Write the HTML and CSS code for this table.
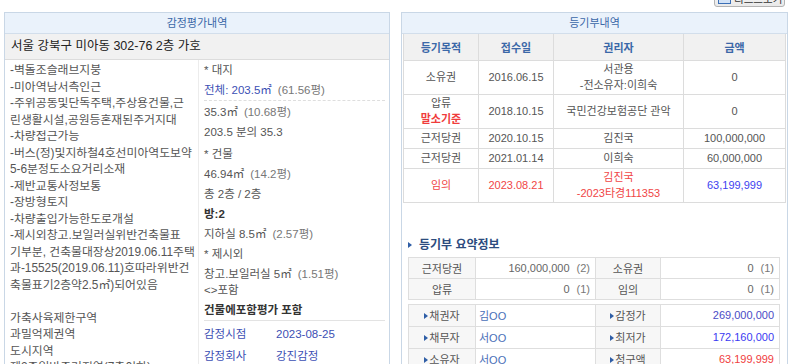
FILE: index.html
```html
<!DOCTYPE html>
<html lang="ko">
<head>
<meta charset="utf-8">
<title>감정평가내역</title>
<link rel="stylesheet" href="styles.css">
</head>
<body>
<div class="page">
  <div class="toolbar">
    <button class="btn"><span class="btn-icon"></span><span class="btn-text">리스트보기</span></button>
  </div>
  <div class="panels">
    <section class="panel left">
      <div class="panel-head">감정평가내역</div>
      <div class="addr">서울 강북구 미아동 302-76 2층 가호</div>
      <div class="appr">
        <div class="desc">-벽돌조슬래브지붕<br>-미아역남서측인근<br>-주위공동및단독주택,주상용건물,근<br>린생활시설,공원등혼재된주거지대<br>-차량접근가능<br>-버스(정)및지하철4호선미아역도보약<br>5-6분정도소요거리소재<br>-제반교통사정보통<br>-장방형토지<br>-차량출입가능한도로개설<br>-제시외창고.보일러실위반건축물표<br>기부분, 건축물대장상2019.06.11주택<br>과-15525(2019.06.11)호따라위반건<br>축물표기2층약2.5㎡)되어있음<br><br>가축사육제한구역<br>과밀억제권역<br>도시지역<br>제2종일반주거지역(7층이하)</div>
        <div class="facts">
          <div class="f">* 대지</div>
          <div class="f"><span class="blue">전체: 203.5㎡</span><span class="py">(61.56평)</span></div>
          <div class="f sep">35.3㎡<span class="py">(10.68평)</span></div>
          <div class="f">203.5 분의 35.3</div>
          <div class="f sec">* 건물</div>
          <div class="f">46.94㎡<span class="py">(14.2평)</span></div>
          <div class="f">총 2층 / 2층</div>
          <div class="f b">방:2</div>
          <div class="f">지하실 8.5㎡<span class="py">(2.57평)</span></div>
          <div class="f">* 제시외</div>
          <div class="f">창고.보일러실 5㎡<span class="py">(1.51평)</span><br>&lt;&gt;포함</div>
          <div class="f b">건물에포함평가 포함</div>
          <div class="meta">
            <div class="m"><span class="mk">감정시점</span><span>2023-08-25</span></div>
            <div class="m"><span class="mk">감정회사</span><span>강진감정</span></div>
          </div>
        </div>
      </div>
    </section>

    <section class="panel right">
      <div class="panel-head">등기부내역</div>
      <table class="reg">
        <colgroup><col class="c1"><col class="c2"><col class="c3"><col></colgroup>
        <thead>
          <tr><th>등기목적</th><th>접수일</th><th>권리자</th><th>금액</th></tr>
        </thead>
        <tbody>
          <tr><td>소유권</td><td>2016.06.15</td><td>서관용<br>-전소유자:이희숙</td><td>0</td></tr>
          <tr><td>압류<br><b class="red">말소기준</b></td><td>2018.10.15</td><td>국민건강보험공단 관악</td><td>0</td></tr>
          <tr><td>근저당권</td><td>2020.10.15</td><td>김진국</td><td>100,000,000</td></tr>
          <tr><td>근저당권</td><td>2021.01.14</td><td>이희숙</td><td>60,000,000</td></tr>
          <tr class="redrow"><td>임의</td><td>2023.08.21</td><td>김진국<br>-2023타경111353</td><td class="amt-blue">63,199,999</td></tr>
        </tbody>
      </table>

      <div class="summary">
        <h3 class="sum-title"><span class="tri"></span>등기부 요약정보</h3>
        <table class="sum">
          <colgroup><col class="s1"><col class="s2"><col class="s3"><col></colgroup>
          <tr><td class="lab">근저당권</td><td class="val">160,000,000<span class="cnt">(2)</span></td><td class="lab">소유권</td><td class="val">0<span class="cnt">(1)</span></td></tr>
          <tr><td class="lab">압류</td><td class="val">0<span class="cnt">(1)</span></td><td class="lab">임의</td><td class="val">0<span class="cnt">(1)</span></td></tr>
        </table>
        <table class="sum sum2">
          <colgroup><col class="s1"><col class="s2"><col class="s3"><col></colgroup>
          <tr><td class="lab"><span class="tri sm"></span>채권자</td><td class="name">김OO</td><td class="lab"><span class="tri sm"></span>감정가</td><td class="val v1">269,000,000</td></tr>
          <tr><td class="lab"><span class="tri sm"></span>채무자</td><td class="name">서OO</td><td class="lab"><span class="tri sm"></span>최저가</td><td class="val v2">172,160,000</td></tr>
          <tr><td class="lab"><span class="tri sm"></span>소유자</td><td class="name">서OO</td><td class="lab"><span class="tri sm"></span>청구액</td><td class="val v3">63,199,999</td></tr>
        </table>
      </div>
    </section>
  </div>
</div>
</body>
</html>
```

FILE: styles.css
```css
* { box-sizing: border-box; margin: 0; padding: 0; }

body {
  margin: 0;
  background: #fff;
  font-family: "Liberation Sans", "Noto Sans CJK KR", sans-serif;
  font-size: 11px;
  color: #555;
}

.page {
  width: 800px;
  height: 364px;
  overflow: hidden;
}

.toolbar {
  height: 12px;
  display: flex;
  justify-content: flex-end;
  padding-right: 15px;
}

.btn {
  height: 22px;
  width: 71px;
  margin-top: -15px;
  border: 1px solid #b3b3b3;
  border-radius: 3px;
  background: linear-gradient(#ffffff, #e9e9e9);
  display: flex;
  align-items: flex-end;
  gap: 3px;
  padding: 0 3px 1px;
  font: 10.5px "Liberation Sans", "Noto Sans CJK KR", sans-serif;
  color: #333;
  overflow: hidden;
  white-space: nowrap;
}

.btn-icon {
  flex: none;
  width: 13px;
  height: 10px;
  margin-bottom: 1px;
  border: 1px solid #3b6fb6;
  background: #d2e2f6;
}

.btn-text {
  line-height: 12px;
}

.panels {
  display: flex;
  gap: 11px;
  padding-left: 4px;
}

.panel {
  border: 1px solid #c9d7e6;
  height: 360px;
  overflow: hidden;
}

.left { width: 386px; }
.right { width: 387px; }

.panel-head {
  height: 21px;
  line-height: 20px;
  text-align: center;
  background: #eaf2fb;
  border-bottom: 1px solid #d2deeb;
  color: #3b68a8;
  font-size: 11px;
}

.addr {
  height: 26px;
  line-height: 25px;
  padding-left: 6px;
  background: #f1f1f1;
  border-bottom: 1px solid #dcdcdc;
  color: #222;
  font-size: 12.5px;
}

.appr {
  display: flex;
}

.desc {
  width: 193px;
  padding: 2px 0 0 5px;
  font-size: 11.85px;
  line-height: 16.5px;
  white-space: nowrap;
  color: #555;
}

.facts {
  flex: 1;
  border-left: 1px solid #ececec;
  padding: 0 4px 0 5px;
  font-size: 11.5px;
}

.f {
  padding: 2px 0;
  line-height: 16px;
  white-space: nowrap;
}

.f.sec { margin-top: 2px; }
.f.sep { border-top: 1px dashed #dedede; padding-top: 3px; }
.f.b { font-weight: bold; color: #333; }

.blue { color: #3c4fb4; }
.py { margin-left: 6px; color: #777; }

.meta {
  border-top: 1px solid #e3e3e3;
  padding-top: 2px;
  color: #3c4fb4;
}

.m {
  height: 22px;
  line-height: 22px;
  display: flex;
}

.mk { width: 72px; }

/* register table */
.reg {
  width: 383px;
  margin-left: 1px;
  border-collapse: collapse;
  table-layout: fixed;
}

.reg .c1 { width: 75px; }
.reg .c2 { width: 75px; }
.reg .c3 { width: 130px; }

.reg th {
  height: 26px;
  background: #f1f1f1;
  color: #3b68a8;
  font-weight: bold;
  border: 1px solid #dcdcdc;
  border-top: none;
}

.reg td {
  height: 20px;
  padding: 0;
  line-height: 16.5px;
  text-align: center;
  border: 1px solid #dcdcdc;
  color: #555;
  white-space: nowrap;
}

.red { color: #f03c3c; }
.redrow td { color: #f04646; }
.redrow td.amt-blue { color: #3d3ff0; }

/* summary */
.summary {
  padding: 0 6px;
}

.sum-title {
  margin-top: 34px;
  height: 16px;
  line-height: 16px;
  font-size: 12px;
  font-weight: bold;
  color: #2c4c7e;
  display: flex;
  align-items: center;
}

.tri {
  display: inline-block;
  width: 0;
  height: 0;
  border-left: 4px solid #2f5ea6;
  border-top: 3px solid transparent;
  border-bottom: 3px solid transparent;
  margin-right: 7px;
}

.tri.sm {
  margin-right: 1px;
  vertical-align: 1px;
}

.sum {
  width: 372px;
  margin-top: 4px;
  border-collapse: collapse;
  table-layout: fixed;
}

.sum .s1 { width: 67px; }
.sum .s2 { width: 120px; }
.sum .s3 { width: 65px; }

.sum td {
  height: 21px;
  padding: 0;
  border: 1px solid #dedede;
  white-space: nowrap;
}

.sum .lab {
  text-align: center;
  background: #f7f7f7;
  color: #555;
}

.sum .val {
  text-align: right;
  padding-right: 5px;
  color: #666;
}

.cnt { margin-left: 7px; color: #777; }

.sum .name {
  padding-left: 3px;
  color: #4a6fb8;
}

.sum .v1 { color: #4b4bc6; }
.sum .v2 { color: #3a3af2; }
.sum .v3 { color: #f04040; }

.sum2 td { height: 22px; }
```
